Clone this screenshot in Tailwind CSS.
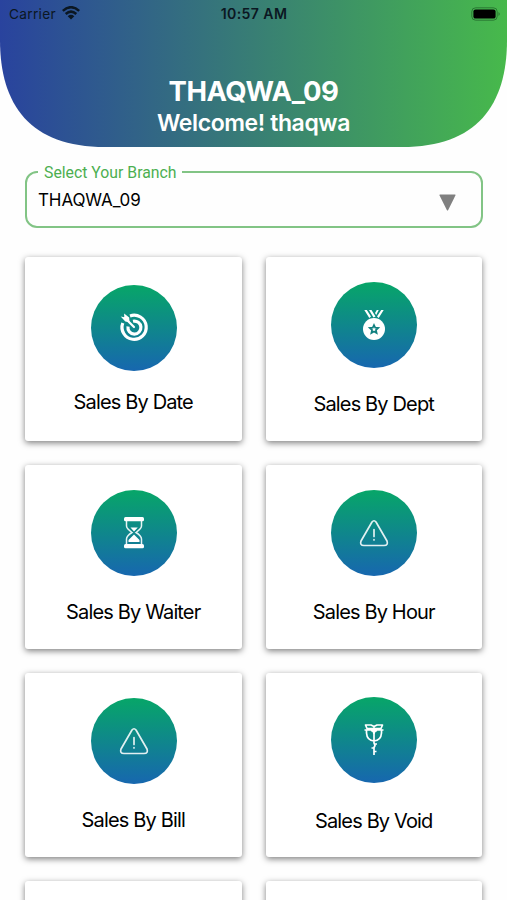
<!DOCTYPE html>
<html lang="en">
<head>
<meta charset="utf-8">
<title>Sales dashboard</title>
<script src="https://cdn.jsdelivr.net/npm/@tailwindcss/browser@4"></script>
</head>
<body class="h-[900px] w-[507px] overflow-hidden bg-[#fefefe] font-['Inter',sans-serif] text-black">
<header class="relative h-[148px] w-full">
  <svg class="absolute inset-0" width="507" height="148" viewBox="0 0 507 148">
    <defs><linearGradient id="head"><stop offset="0" stop-color="#29439e"/><stop offset="1" stop-color="#47b94b"/></linearGradient></defs>
    <path fill="url(#head)" d="M0 0H507V40C507 105 477 147 402 147H105C30 147 0 105 0 40Z"/>
  </svg>
  <div class="relative grid h-7 grid-cols-3 items-center pr-[6px] pl-[9px] text-[#0b1722]">
    <div class="flex items-center gap-[6px] text-[13.7px] tracking-[0.3px]"><span>Carrier</span>
      <svg class="-mt-[2px]" width="18" height="14" viewBox="0 0 18 14" fill="none" stroke="currentColor" stroke-width="2.5"><path d="M.8 4.9Q9-2.5 17.2 4.9M3.7 8Q9 3.2 14.3 8"/><path fill="currentColor" stroke="none" d="M5.7 10.2Q9 7.4 12.3 10.2L9 13.6Z"/></svg>
    </div>
    <div class="-ml-[2px] text-center text-[14.1px] font-semibold tracking-[0.4px] whitespace-nowrap">10:57 AM</div>
    <svg class="-mt-px justify-self-end" width="30" height="14" viewBox="0 0 30 14"><rect x=".8" y=".8" width="25.4" height="12.4" rx="3.8" fill="none" stroke="#1c5b25" stroke-opacity=".65"/><rect x="2.4" y="2.4" width="22.2" height="9.2" rx="2.2" fill="#000"/><path d="M27.5 5Q30 7 27.5 9Z" fill="#1c5b25" opacity=".7"/></svg>
  </div>
  <div class="relative pt-[46px] text-center text-white">
    <h1 class="h-[34px] text-[27.5px] leading-[34px] font-bold tracking-[-0.5px]">THAQWA_09</h1>
    <p class="h-[30px] text-[23px] leading-[30px] font-semibold tracking-[-0.4px]">Welcome! thaqwa</p>
  </div>
</header>
<main class="px-[25px] pt-[14px]">
  <fieldset class="flex h-[66px] w-[458px] flex-col rounded-[12px] border-2 border-[#82c485] pl-[11px]">
    <legend class="px-[6px] font-[Roboto,sans-serif] text-[15.8px] leading-[20px] text-[#4caf50]"><span class="relative top-px">Select Your Branch</span></legend>
    <div class="mt-px flex items-center justify-between pr-[25px]">
      <span class="text-[17px] leading-[35px] tracking-[-0.1px]">THAQWA_09</span>
      <svg class="mt-[4px]" width="17" height="17" viewBox="0 0 17 17"><path d="M1 .5H16Q16.8.5 16.4 1.4L9.2 16Q8.5 17 7.8 16L.6 1.4Q.2.5 1 .5Z" fill="#808080"/></svg>
    </div>
  </fieldset>
  <svg class="absolute" width="0" height="0"><defs>
    <linearGradient id="disc" x1=".5" y1="0" x2=".5" y2="1"><stop offset="0" stop-color="#07a668"/><stop offset="1" stop-color="#1767af"/></linearGradient>
    <symbol id="alert" viewBox="0 0 86 86"><g fill="none" stroke="#fff" stroke-opacity=".88" stroke-width="1.7" stroke-linecap="round" stroke-linejoin="round"><path d="M41 32Q43 29.5 45 32L56 51Q57.5 55.5 53 55.5H33Q28.500 55.5 30 51Z"/><path d="M43 39.500V46.500M43 49.700V50"/></g></symbol>
  </defs></svg>
  <section class="mt-[29px] grid grid-cols-2 gap-6">
    <article class="flex h-[184px] flex-col items-center rounded-[3px] bg-white pt-[28px] shadow-[0_2px_6px_rgba(0,0,0,0.5)]">
      <svg class="ml-px" width="86" height="86" viewBox="0 0 86 86"><circle cx="43" cy="43" r="43" fill="url(#disc)"/>
        <g fill="none" stroke="#fff" stroke-width="3.200"><path d="M39 30.900A12.100 12.100 0 1 1 31.800 38"/><path d="M42 36.200A6.500 6.500 0 1 1 37 41.500"/></g>
        <path d="M34 33L43 42" stroke="#fff" stroke-width="2.200" stroke-linecap="round"/><path d="M29.700 31.500L33.300 32.300L33.100 28.600L38.200 32.400L38.500 37.300L34.300 36.600Z" fill="#fff"/>
      </svg>
      <h2 class="mt-[19px] text-[20px] leading-6 tracking-[-0.850px]">Sales By Date</h2>
    </article>
    <article class="flex h-[184px] flex-col items-center rounded-[3px] bg-white pt-[25px] shadow-[0_2px_6px_rgba(0,0,0,0.5)]">
      <svg class="ml-px" width="86" height="86" viewBox="0 0 86 86"><circle cx="43" cy="43" r="43" fill="url(#disc)"/>
        <g fill="#fff"><circle cx="43" cy="47" r="11"/><path d="M33.300 28H35.800L40 34.500L38.300 36ZM38 28H40.500L44.500 34.500L42.500 35.500ZM52.700 28H50.200L46 34.500L47.700 36ZM47.700 28H45.800L44 31L45.200 33Z"/></g>
        <path d="M43 43L44.200 45.700L47.200 46L44.900 48L45.600 50.900L43 49.400L40.400 50.900L41.100 48L38.800 46L41.800 45.700Z" fill="none" stroke="#118080" stroke-width="1.700"/>
      </svg>
      <h2 class="mt-[24px] text-[20px] leading-6 tracking-[-0.850px]">Sales By Dept</h2>
    </article>
    <article class="flex h-[184px] flex-col items-center rounded-[3px] bg-white pt-[25px] shadow-[0_2px_6px_rgba(0,0,0,0.5)]">
      <svg class="ml-px" width="86" height="86" viewBox="0 0 86 86"><circle cx="43" cy="43" r="43" fill="url(#disc)"/>
        <g fill="#fff"><rect x="33" y="27" width="20" height="4.300" rx="1.500"/><rect x="33" y="54" width="20" height="4.300" rx="1.500"/><path d="M39.500 37.500H46.800L43 41.500ZM37.500 52V50L43 44.500L48.500 50V52Z"/></g>
        <path d="M35.500 31V36Q35.500 38.500 41 42.500Q35.500 46 35.500 49V54M50.500 31V36Q50.500 38.500 45 42.500Q50.500 46 50.500 49V54" fill="none" stroke="#fff" stroke-opacity=".9" stroke-width="1.500"/>
      </svg>
      <h2 class="mt-[24px] text-[20px] leading-6 tracking-[-0.850px]">Sales By Waiter</h2>
    </article>
    <article class="flex h-[184px] flex-col items-center rounded-[3px] bg-white pt-[25px] shadow-[0_2px_6px_rgba(0,0,0,0.5)]">
      <svg class="ml-px" width="86" height="86" viewBox="0 0 86 86"><circle cx="43" cy="43" r="43" fill="url(#disc)"/><use href="#alert" width="86" height="86"/></svg>
      <h2 class="mt-[24px] text-[20px] leading-6 tracking-[-0.850px]">Sales By Hour</h2>
    </article>
    <article class="flex h-[184px] flex-col items-center rounded-[3px] bg-white pt-[25px] shadow-[0_2px_6px_rgba(0,0,0,0.5)]">
      <svg class="ml-px" width="86" height="86" viewBox="0 0 86 86"><circle cx="43" cy="43" r="43" fill="url(#disc)"/><use href="#alert" width="86" height="86"/></svg>
      <h2 class="mt-[24px] text-[20px] leading-6 tracking-[-0.850px]">Sales By Bill</h2>
    </article>
    <article class="flex h-[184px] flex-col items-center rounded-[3px] bg-white pt-[24px] shadow-[0_2px_6px_rgba(0,0,0,0.5)]">
      <svg class="ml-px" width="86" height="86" viewBox="0 0 86 86"><circle cx="43" cy="43" r="43" fill="url(#disc)"/>
        <g fill="none" stroke="#fff" stroke-width="1.700" stroke-linejoin="round"><path d="M34.500 28H40L43 29.500L46 28H51.500L50 31.500H36ZM33.500 33H52.500M35.500 33V36Q36 43.500 43 44Q50 43.500 50.500 36V33M40 33.500Q43 34 43 37Q43 34 46 33.500M43 30V46L44 48.500L43 50.500V58M44 47L46 47M43 51H40.500M43 54.500H45.500"/></g>
      </svg>
      <h2 class="mt-[26px] text-[20px] leading-6 tracking-[-0.850px]">Sales By Void</h2>
    </article>
    <article class="h-[184px] rounded-[3px] bg-white shadow-[0_2px_6px_rgba(0,0,0,0.5)]"></article>
    <article class="h-[184px] rounded-[3px] bg-white shadow-[0_2px_6px_rgba(0,0,0,0.5)]"></article>
  </section>
</main>
</body>
</html>
